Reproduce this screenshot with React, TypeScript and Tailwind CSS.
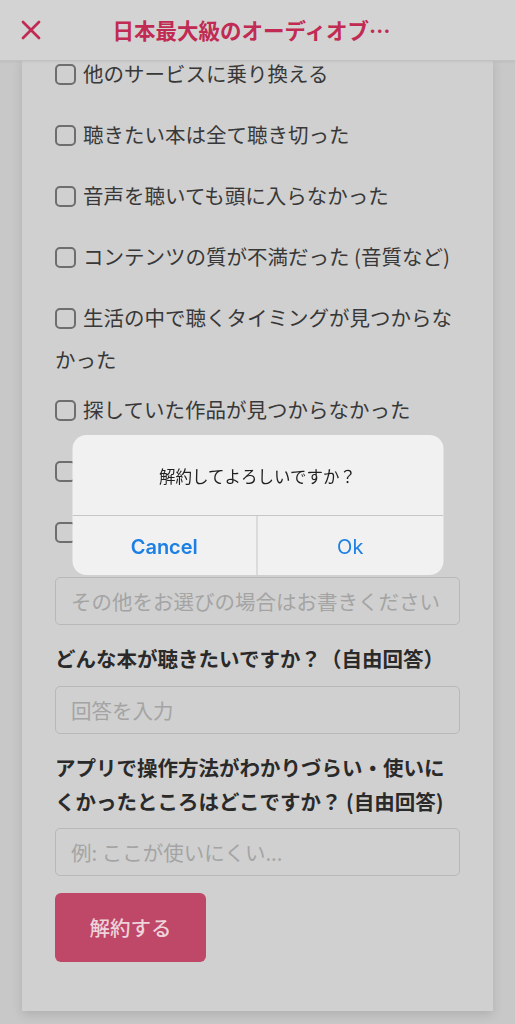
import { X } from 'lucide-react';

const reasons = [
  '他のサービスに乗り換える',
  '聴きたい本は全て聴き切った',
  '音声を聴いても頭に入らなかった',
  'コンテンツの質が不満だった (音質など)',
  '生活の中で聴くタイミングが見つからなかった',
  '探していた作品が見つからなかった',
  '料金が高いと感じた',
  'その他',
];

const jp = "font-['Noto_Sans_CJK_JP',sans-serif]";

function Field({ placeholder }: { placeholder: string }) {
  return (
    <input
      type="text"
      placeholder={placeholder}
      className={`block w-full h-[48px] px-[15px] rounded-[5px] border-[1.5px] border-[#b8b8b8] bg-[#d0d0d0] text-[20.5px] text-[#333] placeholder:text-[#a4a4a4] outline-none ${jp}`}
    />
  );
}

export default function App() {
  return (
    <div className={`min-h-screen bg-[#c8c8c8] ${jp}`}>
      <header className="grid grid-cols-[60px_1fr_60px] items-center h-[61px] bg-[#d3d3d3] border-b border-[#c2c2c2] shadow-[0_1px_2px_rgba(0,0,0,0.06)] relative z-10">
        <button className="pl-[15px] text-[#c12a52]" aria-label="Close">
          <X size={32} strokeWidth={2} />
        </button>
        <div className="flex justify-center">
          <h1 className="max-w-[290px] truncate text-[21.5px] font-bold text-[#c12a52] leading-[30px]">
            日本最大級のオーディオブックサービス
          </h1>
        </div>
        <div />
      </header>

      <main className="mx-[22px] bg-[#d0d0d0] px-[33px] pb-[49px] shadow-[0_4px_10px_rgba(0,0,0,0.12)]">
        <div className="-mt-[3px]">
          {reasons.map((r) => (
            <label key={r} className="block text-[20.5px] leading-[31px] text-[#383838] mb-[19px]">
              <span className="inline-block w-[21px] h-[21px] rounded-[5px] border-2 border-[#6e6e6e] mr-[7px] mb-[15px] align-[-18px]" />
              {r}
            </label>
          ))}
        </div>

        <Field placeholder="その他をお選びの場合はお書きください" />

        <h2 className="mt-[16px] mb-[11px] text-[20.5px] leading-[34px] font-bold text-[#2a2a2a]">
          どんな本が聴きたいですか？（自由回答）
        </h2>
        <Field placeholder="回答を入力" />

        <h2 className="mt-[16px] mb-[10px] text-[20.5px] leading-[34px] font-bold text-[#2a2a2a]">
          アプリで操作方法がわかりづらい・使いにくかったところはどこですか？ (自由回答)
        </h2>
        <Field placeholder="例: ここが使いにくい..." />

        <button className="mt-[17px] w-[151px] h-[69px] rounded-[6px] bg-[#bf4768] text-[20.5px] font-medium text-[#edd3da]">
          解約する
        </button>
      </main>

      <div className="fixed top-[435px] left-1/2 -translate-x-1/2 w-[371px] rounded-[14px] bg-[#f1f1f1] overflow-hidden">
        <div className="h-[80px] flex items-center justify-center text-[16.5px] text-[#1f1f1f] pt-[2px]">
          解約してよろしいですか？
        </div>
        <div className="grid grid-cols-2 border-t border-[#c6c6c6] h-[60px] font-['Inter',sans-serif] text-[20px] text-[#1b7fe3]">
          <button className="font-semibold border-r border-[#c6c6c6] pt-[2px]">Cancel</button>
          <button className="pt-[2px]">Ok</button>
        </div>
      </div>
    </div>
  );
}
